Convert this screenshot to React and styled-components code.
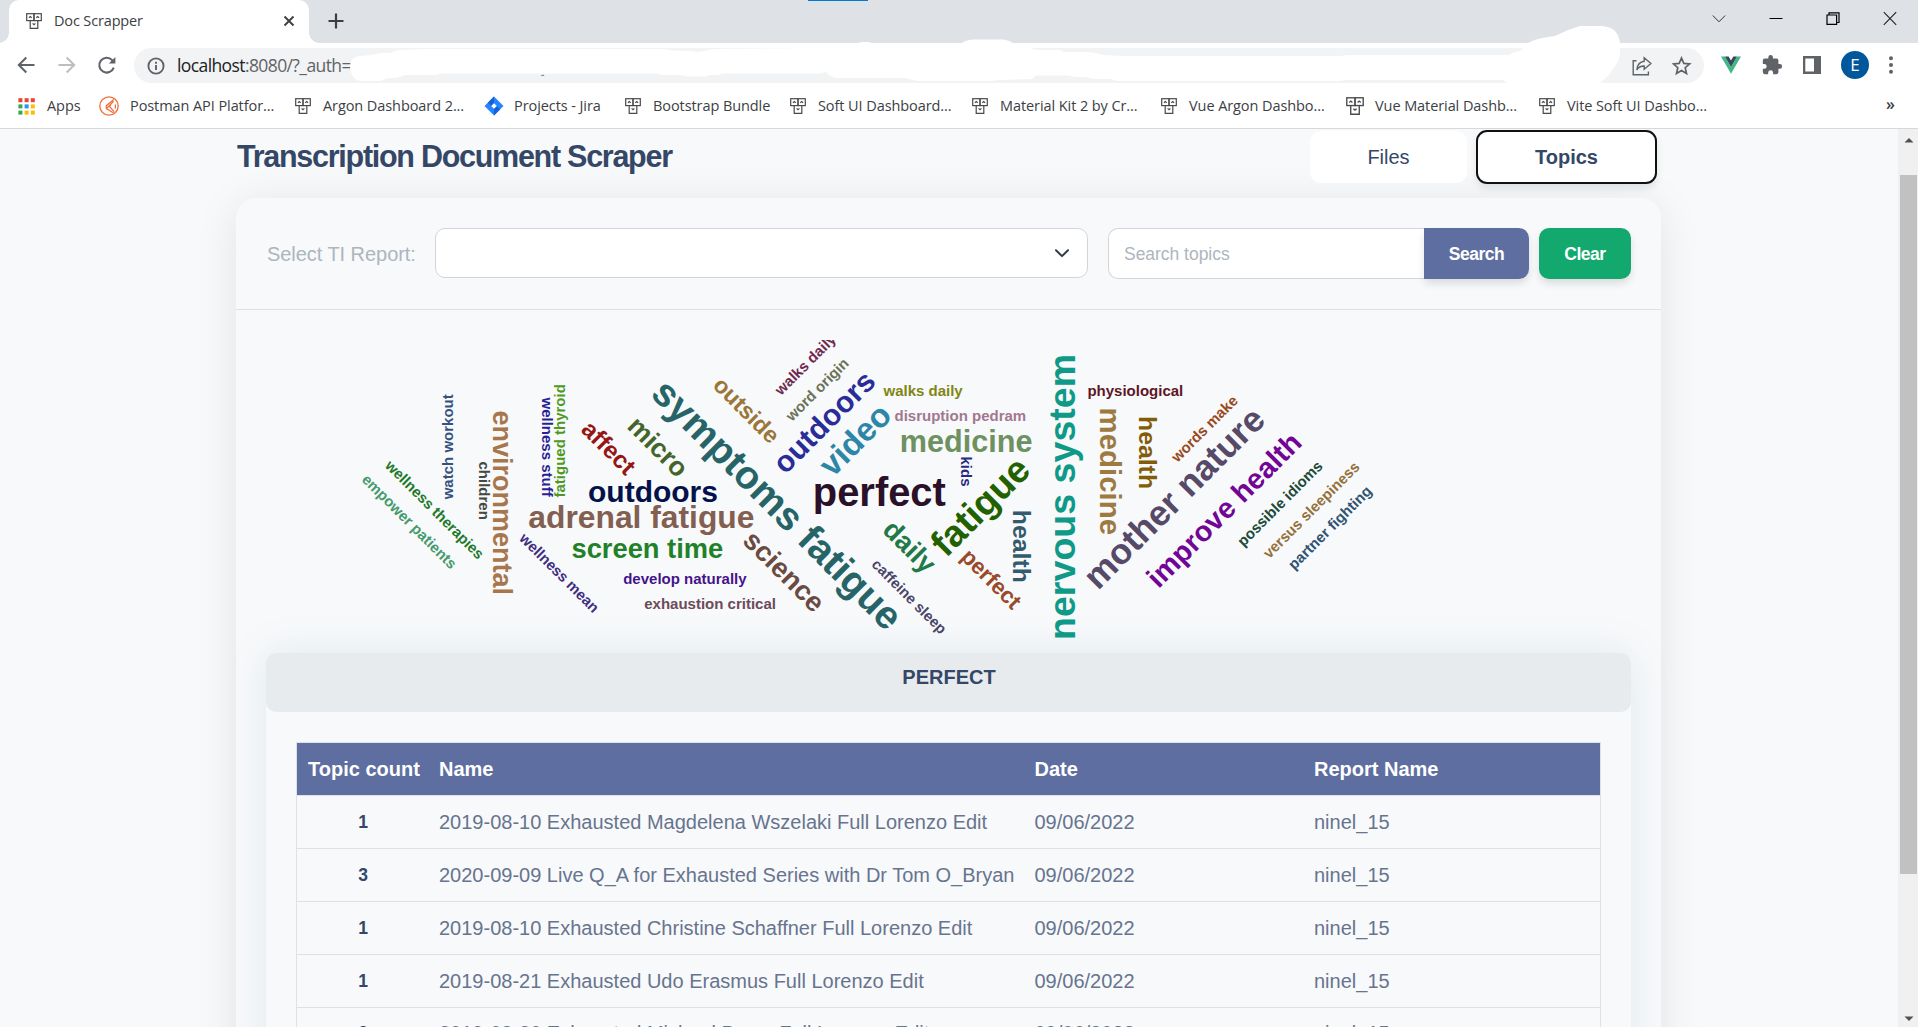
import React from "react";
import styled, { createGlobalStyle, css } from "styled-components";

const Global = createGlobalStyle`
  html, body { margin: 0; padding: 0; }
  body { width: 1918px; height: 1027px; overflow: hidden; background: #f8f9fb; }
  * { box-sizing: border-box; }
`;

const ui = css`font-family: "Open Sans", "Noto Sans", sans-serif;`;

const Window = styled.div`
  width: 1918px;
  height: 1027px;
  display: flex;
  flex-direction: column;
  overflow: hidden;
  position: relative;
  font-family: "Liberation Sans", Arial, sans-serif;
`;

/* ---------- browser chrome ---------- */
const TabStrip = styled.div`
  height: 43px;
  flex: none;
  background: #dee1e6;
  display: flex;
  justify-content: space-between;
  padding-left: 9px;
`;
const TabArea = styled.div`display: flex; align-items: stretch;`;
const Tab = styled.div`
  ${ui}
  width: 300px;
  background: #fff;
  border-radius: 10px 10px 0 0;
  display: flex;
  align-items: center;
  padding: 0 14px 1px 17px;
  position: relative;
  color: #3c4043;
  font-size: 14.5px;
  &::before, &::after {
    content: "";
    position: absolute;
    bottom: 0;
    width: 10px;
    height: 10px;
  }
  &::before { left: -10px; background: radial-gradient(circle at 0 0, transparent 9.5px, #fff 10px); }
  &::after { right: -10px; background: radial-gradient(circle at 100% 0, transparent 9.5px, #fff 10px); }
`;
const TabTitle = styled.span`flex: 1; margin-left: 12px; padding-bottom: 1px; letter-spacing: -0.15px;`;
const NewTab = styled.div`display: flex; align-items: center; padding: 0 0 1px 19px;`;
const WindowControls = styled.div`
  display: flex;
  align-items: flex-start;
  gap: 43px;
  padding: 11px 21px 0 0;
`;
const LoadStrip = styled.div`
  position: absolute;
  top: 0;
  left: 808px;
  width: 302px;
  height: 1px;
  background: linear-gradient(to right, #0078d7 60px, #e1e1e3 60px);
`;
const Toolbar = styled.div`
  height: 45px;
  flex: none;
  background: #fff;
  display: flex;
  align-items: center;
  padding: 0 17px 0 16px;
`;
const NavIcons = styled.div`display: flex; gap: 20px; width: 118px; padding-bottom: 1px;`;
const Address = styled.div`
  ${ui}
  width: 1570px;
  height: 35px;
  border-radius: 18px;
  background: #f1f3f4;
  display: flex;
  align-items: center;
  padding: 0 12px 0 13px;
  font-size: 17.5px;
  color: #5f6368;
`;
const Url = styled.span`
  flex: 1;
  margin-left: 12px;
  padding-bottom: 2px;
  letter-spacing: -0.6px;
  b { font-weight: 400; color: #202124; }
`;
const AddressActions = styled.div`display: flex; align-items: center; gap: 20px;`;
const Extensions = styled.div`
  flex: 1;
  display: flex;
  align-items: center;
  justify-content: space-between;
  padding: 0 8px 1px 17px;
`;
const Avatar = styled.div`
  ${ui}
  width: 28px;
  height: 28px;
  border-radius: 50%;
  background: #01579b;
  color: #fff;
  font-size: 17px;
  line-height: 28px;
  text-align: center;
`;
const Bookmarks = styled.div`
  ${ui}
  height: 41px;
  flex: none;
  background: #fff;
  border-bottom: 1px solid #d6d8da;
  display: flex;
  align-items: center;
  padding: 0 23px 4px 18px;
  color: #3c4043;
  font-size: 14.5px;
`;
const Bookmark = styled.div`
  width: ${(p) => p.$w}px;
  display: flex;
  align-items: center;
  gap: ${(p) => p.$gap || 12}px;
  white-space: nowrap;
  flex: none;
  span { letter-spacing: -0.08px; padding-bottom: 2px; }
`;
const More = styled.div`flex: 1; text-align: right; font-size: 16px; font-weight: 600; padding-bottom: 5px;`;
const Smear = styled.svg`
  position: absolute;
  left: 0;
  top: 0;
  pointer-events: none;
`;

/* ---------- page ---------- */
const Viewport = styled.div`flex: 1; min-height: 0; display: flex; background: #f8f9fb;`;
const Page = styled.main`
  flex: 1;
  overflow: hidden;
  padding: 1px 237px 0 236px;
  color: #344767;
`;
const Head = styled.header`
  height: 68px;
  display: flex;
  justify-content: space-between;
  align-items: flex-start;
  padding: 0 4px 0 1px;
`;
const Title = styled.h1`
  margin: 8px 0 0;
  font-size: 30.5px;
  line-height: 37px;
  font-weight: 700;
  letter-spacing: -1.27px;
`;
const Pills = styled.div`display: flex; gap: 9px; align-items: center;`;
const Pill = styled.button`
  width: ${(p) => (p.$active ? 181 : 157)}px;
  height: ${(p) => (p.$active ? 54 : 52)}px;
  border: ${(p) => (p.$active ? "2px solid #111" : "0")};
  border-radius: 11px;
  background: #fff;
  color: #344767;
  font: ${(p) => (p.$active ? 700 : 400)} 20px "Liberation Sans", Arial, sans-serif;
  box-shadow: ${(p) => (p.$active ? "0 5px 8px -1px rgba(20,20,20,.1)" : "none")};
`;
const Card = styled.section`
  height: 900px;
  border-radius: 20px;
  background: #f8f9fb;
  box-shadow: 0 6px 44px rgba(20, 20, 20, 0.09);
`;
const Filters = styled.div`
  height: 112px;
  border-bottom: 1px solid #dee1e5;
  display: flex;
  align-items: flex-start;
  padding: 30px 30px 0 31px;
`;
const Label = styled.label`
  width: 168px;
  line-height: 53px;
  font-size: 20px;
  letter-spacing: -0.05px;
  color: #adb5bd;
`;
const Select = styled.div`
  width: 653px;
  height: 50px;
  border: 1px solid #d2d6da;
  border-radius: 10px;
  background: #fff;
  display: flex;
  justify-content: flex-end;
  align-items: center;
  padding-right: 17px;
`;
const Search = styled.input`
  width: 316px;
  height: 51px;
  margin-left: 20px;
  border: 1px solid #d2d6da;
  border-right: 0;
  border-radius: 10px 0 0 10px;
  background: #fff;
  padding: 2px 0 0 15px;
  font: 17.5px "Liberation Sans", Arial, sans-serif;
  &::placeholder { color: #adb5bd; opacity: 1; letter-spacing: -0.03px; }
`;
const Button = styled.button`
  width: ${(p) => p.$w}px;
  height: 51px;
  margin-left: ${(p) => p.$ml || 0}px;
  border: 0;
  padding: 2px 0 0;
  border-radius: ${(p) => p.$r};
  background: ${(p) => p.$bg};
  color: #fff;
  font: 700 17.5px "Liberation Sans", Arial, sans-serif;
  letter-spacing: -0.5px;
  box-shadow: 0 5px 8px -1px rgba(20, 20, 20, 0.14);
`;
const CloudBox = styled.div`padding: 30px 30px 0 31px; height: 343px;`;
const Cloud = styled.svg`
  display: block;
  text { font-family: "Liberation Sans", Arial, sans-serif; font-weight: 700; }
`;
const Panel = styled.section`
  margin: 0 30px;
  height: 500px;
  border-radius: 10px;
  background: #f8f9fb;
  box-shadow: 0 0 40px rgba(60, 130, 150, 0.13);
`;
const PanelHead = styled.h2`
  margin: 0 0 30px;
  padding-left: 1px;
  height: 59px;
  border-radius: 10px;
  background: #e8ebed;
  text-align: center;
  font-size: 20px;
  line-height: 48px;
  font-weight: 700;
`;
const Table = styled.div`
  margin: 0 30px;
  border: 1px solid #dee1e6;
  border-bottom: 0;
`;
const Row = styled.div`
  height: 53px;
  display: grid;
  grid-template-columns: 131px 595.5px 279.5px 1fr;
  align-items: center;
  border-bottom: 1px solid #dee1e6;
  font-size: 20px;
  color: #67748e;
  white-space: nowrap;
  padding-left: 11px;
  ${(p) => p.$head && css`background: #5e6ea0; color: #fff; font-weight: 700;`}
  &:last-child { padding-bottom: 1px; }
`;
const Count = styled.div`
  width: 110px;
  text-align: center;
  font-size: 17.5px;
  font-weight: 700;
  color: #344767;
`;

const ScrollTrack = styled.div`
  width: 20px;
  background: #f0f0f0;
  display: flex;
  flex-direction: column;
  align-items: center;
  padding: 8px 0 5px 1px;
`;
const Thumb = styled.div`width: 17px; height: 699px; margin: 32px 0 auto; background: #c1c1c1;`;

/* ---------- drawings ---------- */
const TimIcon = ({ s = 16 }) => (
  <svg width={s} height={s} viewBox="0 0 16 16" fill="none" stroke="#4a4a4a" strokeWidth="1.2">
    <rect x="0.7" y="0.7" width="7.3" height="6.9" />
    <rect x="8" y="0.7" width="7.3" height="6.9" />
    <path d="M4.2 7.6V15.3H11.8V7.6" />
    <path d="M2.9 4.8 4.3 3.6 5.7 4.8M10.3 4.8 11.7 3.6 13.1 4.8M6.6 10.4 8 11.6 9.4 10.4" />
  </svg>
);
const AppsIcon = () => (
  <svg width="17" height="17" viewBox="0 0 17 17">
    {["#ea4335", "#ea4335", "#ea4335", "#34a853", "#2196f3", "#fbbc04", "#34a853", "#fbbc04", "#fbbc04"].map((c, i) => (
      <rect key={i} x={(i % 3) * 6.2 + 0.4} y={Math.floor(i / 3) * 6.2 + 0.2} width="4" height="4" fill={c} />
    ))}
  </svg>
);
const PostmanIcon = () => (
  <svg width="20" height="20" viewBox="0 0 20 20" fill="none" stroke="#f0703c" strokeWidth="1.3">
    <circle cx="10" cy="10" r="9.2" />
    <path d="M14.8 3.4 7.2 9.9 7.4 12.6 14.6 17M7.4 12.6 14.6 5.4M12 8.6 10.4 10.4 15.2 15.6M16.4 8.4V12.4" />
  </svg>
);
const JiraIcon = () => (
  <svg width="20" height="20" viewBox="0 0 20 20">
    <path d="M10 0.5 19.5 10 10 19.5 0.5 10Z" fill="#2684ff" />
    <path d="M10 0.5V7.2L7.2 10 3.8 6.7ZM10 19.5V12.8L12.8 10 16.2 13.3Z" fill="#1263d8" />
    <path d="M10 7.2 12.8 10 10 12.8 7.2 10Z" fill="#fff" />
  </svg>
);

const WORDS = [
  ["empower patients", 361, 480.4, 45, 14.9, "#459a6c"],
  ["wellness therapies", 384.2, 466.4, 45, 14.9, "#1d7a2a"],
  ["watch workout", 453.3, 499.3, -90, 15, "#34527f"],
  ["children", 479.3, 461.5, 90, 15, "#444a42"],
  ["environmental", 492.7, 410.5, 90, 27, "#a8764b"],
  ["wellness stuff", 542, 397.5, 90, 15, "#2a1f96"],
  ["fatigued thyroid", 565.3, 497.5, -90, 15, "#4f9a1e"],
  ["affect", 580, 430.7, 45, 24.2, "#961616"],
  ["micro", 626, 427.6, 45, 26.7, "#44652a"],
  ["symptoms fatigue", 649.4, 395.2, 45, 39.2, "#266468"],
  ["outside", 711.7, 386.6, 45, 23.2, "#9a7638"],
  ["walks daily", 781, 396, -45, 15, "#6f2a4f"],
  ["word origin", 792, 422, -45, 15, "#6b7257"],
  ["outdoors", 785.3, 475.2, -45, 30, "#2a2c98"],
  ["video", 832.5, 478.2, -45, 33, "#2d86a6"],
  ["walks daily", 883.5, 396, 0, 15, "#7f8614"],
  ["disruption pedram", 894.5, 421, 0, 15, "#a07890"],
  ["medicine", 899.8, 451.5, 0, 30.6, "#6d9160"],
  ["kids", 960.5, 456.5, 90, 15, "#262b80"],
  ["perfect", 812.8, 505.5, 0, 39.9, "#2a1028"],
  ["fatigue", 946, 558.5, -45, 37.3, "#226100"],
  ["daily", 881.2, 531.2, 45, 27.2, "#1f7a48"],
  ["health", 1013.3, 509.8, 90, 24.8, "#335a6e"],
  ["perfect", 959.7, 557.9, 45, 22.3, "#9a4a2a"],
  ["caffeine sleep", 870.8, 565.2, 45, 14.9, "#4a4468"],
  ["science", 741.6, 542, 45, 27.7, "#6b4b41"],
  ["outdoors", 588, 501.5, 0, 30, "#04124c"],
  ["adrenal fatigue", 528.3, 527.5, 0, 31.8, "#835f52"],
  ["screen time", 571.5, 557.5, 0, 27.3, "#1f8228"],
  ["develop naturally", 623.2, 584, 0, 15, "#44148a"],
  ["exhaustion critical", 644.2, 609, 0, 15, "#6b4c58"],
  ["wellness mean", 518.6, 539.3, 45, 14.9, "#3f2f80"],
  ["nervous system", 1074.7, 640, -90, 37.6, "#0f9a88"],
  ["physiological", 1087.4, 396, 0, 15, "#5e1626"],
  ["medicine", 1100, 407.6, 90, 29.4, "#9c7a40"],
  ["health", 1138.7, 416, 90, 24.8, "#835c0a"],
  ["words make", 1177.5, 462.9, -45, 15, "#984a1c"],
  ["mother nature", 1098, 590.9, -45, 35.6, "#574a68"],
  ["improve health", 1158.5, 589.2, -45, 28.8, "#720596"],
  ["possible idioms", 1243.5, 547.2, -45, 15, "#204a38"],
  ["versus sleepiness", 1269.2, 559.2, -45, 15, "#94713a"],
  ["partner fighting", 1294.3, 570.5, -45, 15, "#2f5370"],
];

const ROWS = [
  [1, "2019-08-10 Exhausted Magdelena Wszelaki Full Lorenzo Edit"],
  [3, "2020-09-09 Live Q_A for Exhausted Series with Dr Tom O_Bryan"],
  [1, "2019-08-10 Exhausted Christine Schaffner Full Lorenzo Edit"],
  [1, "2019-08-21 Exhausted Udo Erasmus Full Lorenzo Edit"],
  [2, "2019-08-20 Exhausted Michael Breus Full Lorenzo Edit"],
];

const BOOKMARKS = [
  ["Argon Dashboard 2...", 189],
  ["jira", 141],
  ["Bootstrap Bundle", 165],
  ["Soft UI Dashboard...", 182],
  ["Material Kit 2 by Cr...", 189],
  ["Vue Argon Dashbo...", 185],
  ["Vue Material Dashb...", 193],
  ["Vite Soft UI Dashbo...", 170],
];

export default function App() {
  return (
    <Window>
      <Global />
      <TabStrip>
        <TabArea>
          <Tab>
            <TimIcon />
            <TabTitle>Doc Scrapper</TabTitle>
            <svg width="12" height="12" viewBox="0 0 12 12" stroke="#3c4043" strokeWidth="1.9"><path d="M1.5 1.5 10.5 10.5M10.5 1.5 1.5 10.5" /></svg>
          </Tab>
          <NewTab>
            <svg width="16" height="16" viewBox="0 0 16 16" stroke="#3c4043" strokeWidth="2.2"><path d="M8 0.5V15.5M0.5 8H15.5" /></svg>
          </NewTab>
        </TabArea>
        <WindowControls>
          <svg width="14" height="15" viewBox="0 0 14 15" fill="none" stroke="#333"><path d="M0.8 4.5 7 10.8 13.2 4.5" /></svg>
          <svg width="14" height="15" viewBox="0 0 14 15" fill="none" stroke="#000"><path d="M0.5 7.5H13.5" /></svg>
          <svg width="14" height="15" viewBox="0 0 14 15" fill="none" stroke="#000" strokeWidth="1.2"><path d="M1 4H10.6V13.4H1ZM3 4V1.8H13V11.5H10.8" /></svg>
          <svg width="14" height="15" viewBox="0 0 14 15" fill="none" stroke="#222" strokeWidth="1.1"><path d="M0.8 1.2 13.2 13.8M13.2 1.2 0.8 13.8" /></svg>
        </WindowControls>
      </TabStrip>
      <LoadStrip />
      <Toolbar>
        <NavIcons>
          <svg width="20" height="20" viewBox="0 0 20 20" fill="none" stroke="#5f6368" strokeWidth="2"><path d="M18.5 10H3M10.3 2.5 2.8 10 10.3 17.5" /></svg>
          <svg width="20" height="20" viewBox="0 0 20 20" fill="none" stroke="#bcbec1" strokeWidth="2"><path d="M2.5 10H18M10.7 2.5 18.2 10 10.7 17.5" /></svg>
          <svg width="20" height="20" viewBox="0 0 20 20" fill="none" stroke="#5f6368" strokeWidth="2.1"><path d="M17.7 12.6A7.4 7.4 0 1 1 16.1 5.1L18.1 7.2" /><path d="M19.4 2V8.6H12.8Z" fill="#5f6368" stroke="none" /></svg>
        </NavIcons>
        <Address>
          <svg width="18" height="18" viewBox="0 0 18 18" fill="none" stroke="#5f6368" strokeWidth="1.9"><circle cx="9" cy="9" r="7.6" /><path d="M9 8V13M9 4.8V6.7" /></svg>
          <Url><b>localhost</b>:8080/?_auth=</Url>
          <AddressActions>
            <svg width="20" height="20" viewBox="0 0 20 20" fill="none" stroke="#5f6368" strokeWidth="1.4"><path d="M4.5 4.7H1.2V18.8H16.4V15.5M12.2 1.8 18.9 7.5 12.2 13.2V10C8.5 10 6.2 11.4 4.8 14 5.2 9.2 7.6 5.8 12.2 5.2Z" /></svg>
            <svg width="20" height="20" viewBox="0 0 20 20" fill="none" stroke="#5f6368" strokeWidth="1.7"><path d="M9.5 2 11.8 7.4 17.6 7.9 13.2 11.7 14.5 17.4 9.5 14.4 4.5 17.4 5.8 11.7 1.4 7.9 7.2 7.4Z" /></svg>
          </AddressActions>
        </Address>
        <Extensions>
          <svg width="20" height="18" viewBox="0 0 20 18"><path d="M0 0.5H4L10 11 16 0.5H20L10 17.8Z" fill="#41b883" /><path d="M4 0.5H7.6L10 4.6 12.4 0.5H16L10 11Z" fill="#35495e" /></svg>
          <svg width="22" height="22" viewBox="0 0 24 24" fill="#5f6368"><path d="M20.5 11H19V7a2 2 0 0 0-2-2h-4V3.5a2.5 2.5 0 0 0-5 0V5H4a2 2 0 0 0-2 2v3.8h1.5a2.7 2.7 0 0 1 0 5.4H2V20a2 2 0 0 0 2 2h3.8v-1.5a2.7 2.7 0 0 1 5.4 0V22H17a2 2 0 0 0 2-2v-4h1.5a2.5 2.5 0 0 0 0-5z" /></svg>
          <svg width="18" height="18" viewBox="0 0 18 18"><path d="M0 0H18V18H0ZM2.3 2.6V15.4H11V2.6Z" fill="#5f6368" fillRule="evenodd" /></svg>
          <Avatar>E</Avatar>
          <svg width="4" height="18" viewBox="0 0 4 18" fill="#5f6368"><circle cx="2" cy="2.2" r="2" /><circle cx="2" cy="9" r="2" /><circle cx="2" cy="15.8" r="2" /></svg>
        </Extensions>
      </Toolbar>
      <Bookmarks>
        <Bookmark $w={81}><AppsIcon /><span>Apps</span></Bookmark>
        <Bookmark $w={196} $gap={11}><PostmanIcon /><span>Postman API Platfor...</span></Bookmark>
        {BOOKMARKS.map(([t, w], i) =>
          t === "jira" ? (
            <Bookmark key={t} $w={w} $gap={10}><JiraIcon /><span>Projects - Jira</span></Bookmark>
          ) : (
            <Bookmark key={t} $w={w} $gap={i === 6 ? 11 : 12}><TimIcon s={i === 6 ? 18 : 16} /><span>{t}</span></Bookmark>
          )
        )}
        <More>»</More>
      </Bookmarks>
      <Smear width="1918" height="90" viewBox="0 0 1918 90" fill="#fff">
        <path d="M350 66Q351 56 360 56L372 55 380 53H390L398 50 425 49H664L672 50.5 690 51 697 52 715 49 813 48 858 43 862 42H868L872 43H962Q966 39.5 975 39.5H1003Q1009 40 1013 43L1030 48 1037 50H1060L1064 52H1090L1104 55 1122 56H1341L1347 55H1508L1515 52 1520 51 1528 43Q1536 38 1555 36L1568 30 1580 26H1602Q1611 27 1615 31 1620 37 1620 44V55Q1619 62 1608 76L1600 83H1507L1503 80H1345L1340 81H1118L1111 79H1095L1085 77H1075L1068 75.5H1036L1032 79 998 80 991 81H918L905 78H835L829 75 826 72 820 73.5H723L718 75H709L705 76.5H688L680 75H662L657 73.5H440L437 75H405L396 78H388L380 81H361Q351 80 350 66Z" />
        <path d="M541 75.5H544L543 74.5" stroke="#777" strokeWidth="0.8" fill="none" />
      </Smear>
      <Viewport>
        <Page>
          <Head>
            <Title>Transcription Document Scraper</Title>
            <Pills>
              <Pill>Files</Pill>
              <Pill $active>Topics</Pill>
            </Pills>
          </Head>
          <Card>
            <Filters>
              <Label>Select TI Report:</Label>
              <Select>
                <svg width="16" height="12" viewBox="0 0 16 12" fill="none" stroke="#343a40" strokeWidth="2" strokeLinecap="round" strokeLinejoin="round"><path d="M2 3.3 8 9.1 14 3.3" /></svg>
              </Select>
              <Search placeholder="Search topics" />
              <Button $w={105} $r="0 10px 10px 0" $bg="#5e6ea0">Search</Button>
              <Button $w={92} $ml={10} $r="10px" $bg="#12a86e">Clear</Button>
            </Filters>
            <CloudBox>
              <Cloud width="1363" height="299" viewBox="267 340 1363 299">
                {WORDS.map(([t, x, y, r, s, c], i) => (
                  <text key={i} transform={`translate(${x} ${y}) rotate(${r})`} fontSize={s} fill={c}>{t}</text>
                ))}
              </Cloud>
            </CloudBox>
            <Panel>
              <PanelHead>PERFECT</PanelHead>
              <Table>
                <Row $head><div>Topic count</div><div>Name</div><div>Date</div><div>Report Name</div></Row>
                {ROWS.map(([n, name]) => (
                  <Row key={name}><Count>{n}</Count><div>{name}</div><div>09/06/2022</div><div>ninel_15</div></Row>
                ))}
              </Table>
            </Panel>
          </Card>
        </Page>
        <ScrollTrack>
          <svg width="10" height="6" viewBox="0 0 10 6"><path d="M0.5 5.5 5 1 9.5 5.5Z" fill="#505050" /></svg>
          <Thumb />
          <svg width="10" height="6" viewBox="0 0 10 6"><path d="M0.5 0.5 5 5 9.5 0.5Z" fill="#505050" /></svg>
        </ScrollTrack>
      </Viewport>
    </Window>
  );
}
